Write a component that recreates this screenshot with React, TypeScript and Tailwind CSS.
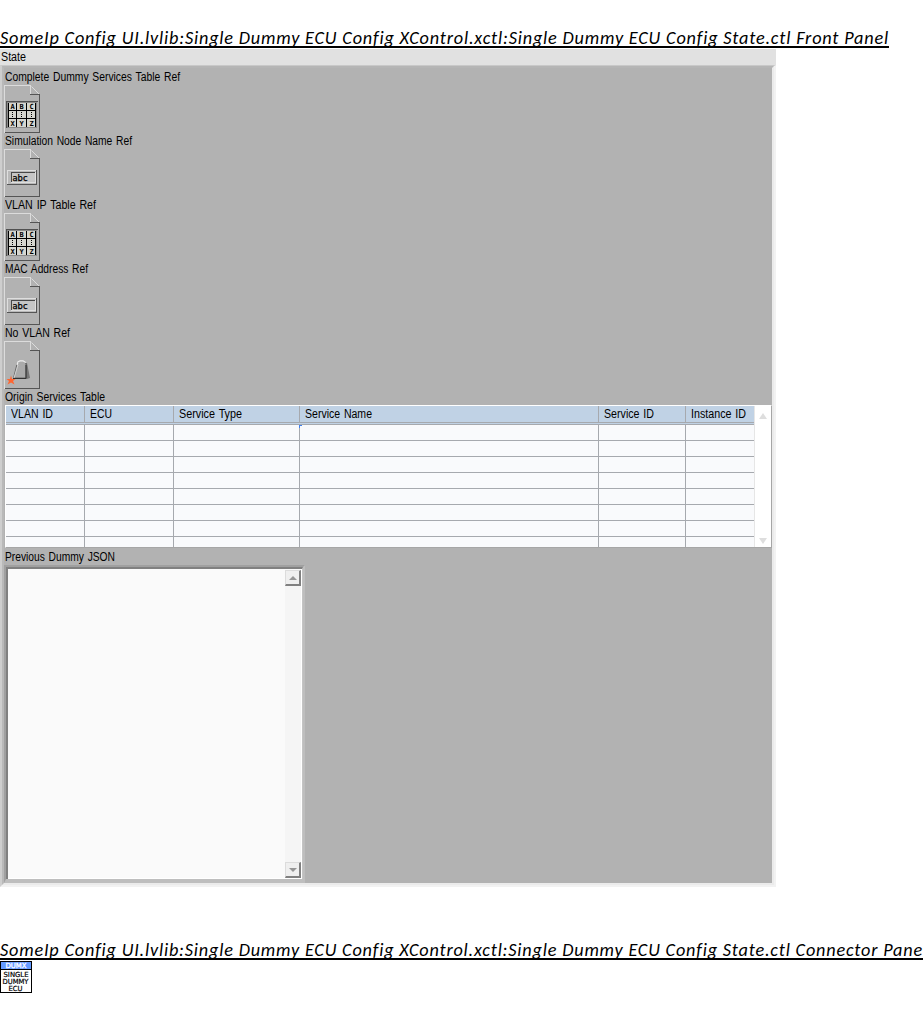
import { useLayoutEffect, useRef } from "react";
import type { ReactNode } from "react";

/** Single line of text condensed or stretched horizontally to fill the given width. */
function FitText({ text, width, className = "" }: { text: string; width: number; className?: string }) {
  const ref = useRef<HTMLSpanElement>(null);
  useLayoutEffect(() => {
    const el = ref.current;
    if (!el) return;
    el.style.transform = "none";
    const natural = el.getBoundingClientRect().width;
    el.style.transform = `scaleX(${width / natural})`;
  }, [text, width]);
  return (
    <span className="block" style={{ width }}>
      <span ref={ref} className={`block w-max origin-left whitespace-pre ${className}`}>
        {text}
      </span>
    </span>
  );
}

function Heading({ text, width }: { text: string; width: number }) {
  return (
    <h2 className="h-[20px] w-fit overflow-hidden border-b-2 border-black font-['Carlito','Lato',sans-serif] text-[18px] italic leading-[21px] text-black">
      <FitText text={text} width={width} className="tracking-[0.8px]" />
    </h2>
  );
}

function RefIcon({ children }: { children: ReactNode }) {
  return (
    <svg width="36" height="48" viewBox="0 0 36 48" className="block" shapeRendering="crispEdges">
      <path d="M0 0H27V1H1V48H0Z" fill="#dcdcdc" />
      <path d="M26 0H27V9H26Z" fill="#dcdcdc" />
      <path d="M27.5 1.5L35 9" stroke="#dcdcdc" fill="none" shapeRendering="auto" />
      <path d="M26 9H36V48H1V47H35V10H26Z" fill="#555" />
      {children}
    </svg>
  );
}

function TableRefIcon() {
  return (
    <RefIcon>
      <path d="M2 16H34V17H33V43H2Z" fill="#8a8a8a" />
      <path d="M2 16H34V17H3V43H2Z" fill="#505050" />
      <path d="M4 18H32V42H4Z" fill="#000" />
      <g fill="#d6d6cf">
        {[5, 13, 23].map((x, i) =>
          [18, 26, 34].map((y) => (
            <rect key={`${x}-${y}`} x={x} y={y} width={i === 0 ? 7 : i === 1 ? 9 : 8} height={y === 34 ? 8 : 7} />
          )),
        )}
      </g>
      <g fill="#000">
        {[8, 17, 27].map((x) => [27, 29, 31].map((y) => <rect key={`${x}-${y}`} x={x} y={y} width="1" height="1" />))}
      </g>
      <g className="font-['DejaVu_Sans_Mono',monospace] text-[7px] font-bold" fill="#000" textAnchor="middle">
        <text x="8.5" y="24">A</text>
        <text x="17.5" y="24">B</text>
        <text x="27.5" y="24">C</text>
        <text x="8.5" y="41">X</text>
        <text x="17.5" y="41">Y</text>
        <text x="27.5" y="41">Z</text>
      </g>
    </RefIcon>
  );
}

function StringRefIcon() {
  return (
    <RefIcon>
      <rect x="3" y="21" width="30" height="15" fill="#555" />
      <rect x="3" y="21" width="29" height="14" fill="#dedede" />
      <rect x="4" y="22" width="28" height="13" fill="#b9b9b9" />
      <rect x="7" y="23" width="25" height="11" fill="#dedede" />
      <rect x="7" y="23" width="24" height="10" fill="#484848" />
      <rect x="8" y="24" width="23" height="9" fill="#c6c6c6" />
      <text x="8.5" y="32" textLength="15" lengthAdjust="spacingAndGlyphs" className="font-['DejaVu_Sans',sans-serif] text-[8px]" fill="#000" stroke="#000" strokeWidth="0.25">
        abc
      </text>
    </RefIcon>
  );
}

function SwitchRefIcon() {
  return (
    <RefIcon>
      <g shapeRendering="auto">
        <path d="M20 22H23L26 37L23 38H16Z" fill="#777" />
        <path d="M13 23L15 20.5H21L22 23V37H9.5Z" fill="#aaa" stroke="#555" strokeWidth="0.8" />
        <path d="M13 24L14 21L16 20H19L22 21.5" fill="none" stroke="#eee" strokeWidth="1.3" />
        <path d="M14 24L10 37" stroke="#d0d0d0" />
        <path d="M9 37.5H22V24" fill="none" stroke="#333" />
        <path d="M7 34.5L8 38H11.5L9 40L10.5 43.5L7 41.5L3.5 43.5L5 40L2.5 38H6Z" fill="#ff6530" />
      </g>
    </RefIcon>
  );
}

const labelClass =
  "font-['Liberation_Sans',sans-serif] text-[12px] leading-[16px] [word-spacing:1px] text-black";

function RefControl({ label, width, children }: { label: string; width: number; children: ReactNode }) {
  return (
    <div className="h-[64px]">
      <div className="h-[16px] pl-[1px]">
        <FitText text={label} width={width} className={labelClass} />
      </div>
      {children}
    </div>
  );
}

const columns = [
  { title: "VLAN ID", text: 42, cell: "w-[79px] border-r pl-[5px]" },
  { title: "ECU", text: 22, cell: "w-[89px] border-r pl-[5px]" },
  { title: "Service Type", text: 63, cell: "w-[126px] border-r pl-[5px]" },
  { title: "Service Name", text: 67, cell: "w-[299px] border-r pl-[5px]" },
  { title: "Service ID", text: 50, cell: "w-[87px] border-r pl-[5px]" },
  { title: "Instance ID", text: 55, cell: "w-[68px] pl-[5px]" },
];

function ServicesTable() {
  return (
    <div className="flex h-[143px] w-[767px] border border-b-[#a6a6a6] border-l-white border-r-[#a6a6a6] border-t-white bg-white">
      <div className="h-[141px] w-[748px] shrink-0 overflow-hidden">
        <div className="flex h-[17px] border-b border-[#a6a9ae] bg-[#c0d2e5]">
          {columns.map((c) => (
            <div key={c.title} className={`${c.cell} h-[16px] shrink-0 border-[#a6a9ae]`}>
              <FitText text={c.title} width={c.text} className={labelClass} />
            </div>
          ))}
        </div>
        <div className="h-[2px] border-b border-[#a6a9ae] bg-[#c0d2e5]" />
        {[0, 1, 2, 3, 4, 5, 6, 7].map((r) => (
          <div key={r} className="flex h-[16px] border-b border-[#a6a9ae] bg-[#f9fafc]">
            {columns.map((c, i) => (
              <div key={c.title} className={`${c.cell} relative h-[15px] shrink-0 border-[#a6a9ae]`}>
                {r === 0 && i === 3 && (
                  <span className="absolute -left-px top-0 h-[3px] w-[3px] border-l border-t border-[#3f80ee]" />
                )}
              </div>
            ))}
          </div>
        ))}
      </div>
      <div className="flex w-[17px] shrink-0 flex-col items-center justify-between border-l border-[#e6e6e6] pb-[3px] pt-[7px]">
        <svg width="8" height="6" className="block"><path d="M4 0L8 6H0Z" fill="#dedede" /></svg>
        <svg width="8" height="6" className="block"><path d="M4 6L8 0H0Z" fill="#dedede" /></svg>
      </div>
    </div>
  );
}

function ScrollButton({ down = false }: { down?: boolean }) {
  return (
    <div className="flex h-[16px] w-[16px] items-center justify-center border-b-2 border-l border-r-2 border-t border-b-[#808080] border-l-[#dcdcdc] border-r-[#808080] border-t-[#dcdcdc] bg-[#efefef]">
      <svg width="8" height="4" className="block">
        <path d={down ? "M0 0H8L4 4Z" : "M4 0L8 4H0Z"} fill="#969696" />
      </svg>
    </div>
  );
}

function JsonBox() {
  return (
    <div className="h-[318px] w-[301px] border-b-[4px] border-l-[2px] border-r-[2px] border-t-[2px] border-b-[#bebebe] border-l-[#a0a0a0] border-r-[#bebebe] border-t-[#a0a0a0]">
      <div className="h-full border-l-2 border-r border-t-2 border-l-[#808080] border-r-[#c4c4c4] border-t-[#808080]">
        <div className="flex h-full justify-end border-b border-r border-white bg-[#fafafa] pt-[1px]">
          <div className="flex w-[16px] flex-col justify-between bg-[#f5f5f5]">
            <ScrollButton />
            <ScrollButton down />
          </div>
        </div>
      </div>
    </div>
  );
}

export default function App() {
  return (
    <main className="h-[1018px] w-[923px] overflow-hidden bg-white pt-[28px]">
      <Heading
        text="SomeIp Config UI.lvlib:Single Dummy ECU Config XControl.xctl:Single Dummy ECU Config State.ctl Front Panel"
        width={889}
      />
      <section className="mt-[1px] w-[776px]">
        <div className="h-[16px] bg-[#e1e1e1] pl-[1px]">
          <FitText text="State" width={25} className={labelClass} />
        </div>
        <div className="h-[822px] border-b-2 border-l-2 border-r-2 border-t border-b-[#f2f2f2] border-l-[#cecece] border-r-[#f2f2f2] border-t-[#c8c8c8]">
          <div className="h-full border-b-2 border-l-2 border-r-2 border-t-2 border-b-[#ebebeb] border-l-[#b9b9b9] border-r-[#ebebeb] border-t-[#b5b5b5] bg-[#b2b2b2] pt-[1px]">
            <RefControl label="Complete Dummy Services Table Ref" width={175}><TableRefIcon /></RefControl>
            <RefControl label="Simulation Node Name Ref" width={127}><StringRefIcon /></RefControl>
            <RefControl label="VLAN IP Table Ref" width={91}><TableRefIcon /></RefControl>
            <RefControl label="MAC Address Ref" width={83}><StringRefIcon /></RefControl>
            <RefControl label="No VLAN Ref" width={65}><SwitchRefIcon /></RefControl>
            <div className="h-[16px] pl-[1px]">
              <FitText text="Origin Services Table" width={100} className={labelClass} />
            </div>
            <div className="pl-[1px]"><ServicesTable /></div>
            <div className="h-[17px] pl-[1px] pt-px">
              <FitText text="Previous Dummy JSON" width={110} className={labelClass} />
            </div>
            <JsonBox />
          </div>
        </div>
      </section>
      <div className="mt-[53px]">
        <Heading
          text="SomeIp Config UI.lvlib:Single Dummy ECU Config XControl.xctl:Single Dummy ECU Config State.ctl Connector Pane"
          width={923}
        />
        <svg width="32" height="32" viewBox="0 0 32 32" className="mt-[1px] block">
          <rect width="32" height="32" fill="#000" />
          <rect x="1" y="1" width="30" height="7" fill="#659aff" />
          <rect x="1" y="9" width="30" height="22" fill="#fff" />
          <g className="font-['DejaVu_Sans',sans-serif] text-[7px]">
            <text x="5.5" y="7" textLength="21" lengthAdjust="spacingAndGlyphs" fill="#fff" stroke="#fff" strokeWidth="0.3">DUMX</text>
            <g fill="#000" stroke="#000" strokeWidth="0.2">
              <text x="3.5" y="16" textLength="25" lengthAdjust="spacingAndGlyphs">SINGLE</text>
              <text x="2.5" y="23" textLength="26" lengthAdjust="spacingAndGlyphs">DUMMY</text>
              <text x="8.5" y="30" textLength="14" lengthAdjust="spacingAndGlyphs">ECU</text>
            </g>
          </g>
        </svg>
      </div>
    </main>
  );
}
